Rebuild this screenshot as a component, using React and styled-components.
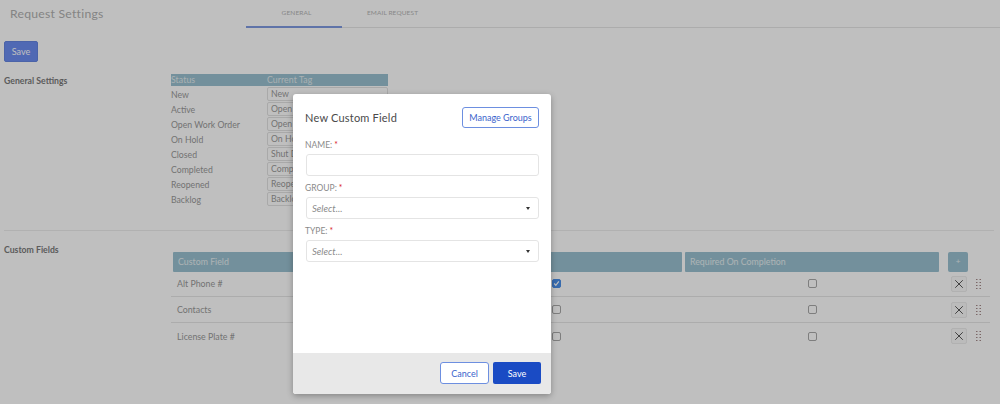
import React from "react";
import styled, { createGlobalStyle } from "styled-components";
import { X } from "lucide-react";

const Global = createGlobalStyle`
  html, body { margin: 0; padding: 0; background: #fff; }
  * { box-sizing: border-box; }
  body { font-family: "Lato", "Open Sans", sans-serif; }
`;
const Page = styled.div`position: relative; width: 1000px; height: 404px; overflow: hidden; background: #fff;`;
const Header = styled.header`display: flex; height: 28px; padding-left: 10px;`;
const Title = styled.h1`margin: 0; width: 236px; font-size: 12.2px; line-height: 27px; font-weight: 400; color: #b0b0b0; letter-spacing: .25px;`;
const Tabs = styled.nav`display: flex; flex: 1; border-bottom: 1px solid #e6e6e6; height: 28px;`;
const Tab = styled.div`
  width: 96px; padding-left: 5px; text-align: center; font-size: 6.5px; line-height: 25px; color: #b5b5b5; letter-spacing: .12px;
  border-bottom: 2px solid ${p => (p.$active ? "#7f9ae0" : "transparent")}; height: 28px;
`;
const Toolbar = styled.div`padding: 13px 0 0 4px;`;
const PrimaryBtn = styled.button`
  display: block; width: 34px; height: 21px; padding: 0; border: 1px solid #6485e0; border-radius: 2px; background: #6b8cf1;
  color: #fff; font: 400 9px "Lato", sans-serif;
`;
const Section = styled.section`display: flex; padding: 12px 0 0 4px;`;
const SectionLabel = styled.div`width: ${p => p.$w}px; font-size: 8.7px; font-weight: 700; color: #7a7a7a; line-height: 14px;`;
const StatusTable = styled.div`display: grid; grid-template-columns: 96px 121px; width: 217px; font-size: 8.7px; color: #999;`;
const StatusHead = styled.div`background: #9ac1d0; color: #e3ecef; height: 12px; line-height: 12px; margin-bottom: 1px; letter-spacing: .1px;`;
const StatusName = styled.div`height: 15px; line-height: 15px;`;
const TagBox = styled.div`height: 14px; line-height: 12px; margin-bottom: 1px; border: 1px solid #e2e2e2; border-radius: 2px; padding-left: 3px; background: #fff;`;
const Divider = styled.hr`margin: 23px 0 0 4px; border: 0; border-top: 1px solid #ededed; width: 990px;`;
const CustomSection = styled(Section)`padding-top: 12px;`;
const CustomWrap = styled.div`width: 819px; margin-top: 9px;`;
const CustomHead = styled.div`display: grid; grid-template-columns: 254px 252px 254px 26px; column-gap: 3px; padding-left: 2px; margin-bottom: -1px;`;
const HeadCell = styled.div`
  height: 20px; line-height: 20px; padding-left: 5px; background: #9ac1d0; color: #e6eff2; font-size: 8.8px; border-radius: 1px;
`;
const AddBtn = styled.button`
  margin-left: 6px; width: 20px; height: 20px; padding: 0; border: 0; border-radius: 2px; background: #9ac1d0; color: #e8f0f3; font-size: 8px; line-height: 20px;
`;
const Row = styled.div`
  display: grid; grid-template-columns: 254px 252px 254px 26px 1fr; column-gap: 3px; align-items: center; height: 26px; padding-left: 2px;
  border-bottom: ${p => (p.$last ? "none" : "1px solid #e6e6e6")};
`;
const RowName = styled.div`font-size: 8.8px; color: #999; padding-left: 4px;`;
const CheckCell = styled.div`display: flex; justify-content: center;`;
const Check = styled.span`
  width: 9px; height: 9px; border-radius: 2px; display: flex; align-items: center; justify-content: center;
  border: 1px solid ${p => (p.$on ? "#4a8fe8" : "#a8a8a8")}; background: ${p => (p.$on ? "#4a8fe8" : "#fff")};
`;
const DelBtn = styled.button`
  margin-left: 9px; width: 16px; height: 16px; padding: 0; display: flex; align-items: center; justify-content: center;
  border: 1px solid #ececec; border-radius: 2px; background: #fafafa; color: #333;
`;
const Grip = styled.svg`display: block; margin-left: 5px;`;
const Overlay = styled.div`position: absolute; inset: 0; background: rgba(0,0,0,.25);`;
const Modal = styled.div`
  position: absolute; left: 293px; top: 94px; width: 258px; height: 300px; background: #fff; border-radius: 3px;
  box-shadow: 0 2px 6px rgba(0,0,0,.3); display: flex; flex-direction: column; overflow: hidden;
`;
const ModalBody = styled.div`flex: 1; padding: 13px 12px 0;`;
const ModalHead = styled.div`display: flex; justify-content: space-between; align-items: center; height: 21px; margin-bottom: 11px;`;
const ModalTitle = styled.h2`margin: 0; font-size: 11px; font-weight: 400; color: #4a4a4a; letter-spacing: .2px;`;
const OutlineBtn = styled.button`
  width: ${p => p.$w}px; height: ${p => p.$h}px; padding: 0; background: #fff; border: 1px solid #6d8fe0; border-radius: 3px;
  color: #3a63cc; font: 400 9px "Lato", sans-serif;
`;
const Label = styled.label`display: block; height: 13px; line-height: 13px; font-size: 8.5px; color: #8a8a8a;`;
const Req = styled.span`color: #d8232a; margin-left: 2px;`;
const Field = styled.div`
  display: flex; align-items: center; justify-content: space-between; width: 233px; height: 22px; margin: 2px 0 6px 1px; padding: 0 8px 0 5px;
  border: 1px solid #e4e4e4; border-radius: 3px; background: #fff; font-size: 9.5px; font-style: italic; color: #8a8a8a;
`;
const Caret = styled.span`width: 0; height: 0; border: 2.5px solid transparent; border-top: 3px solid #333; border-bottom: 0;`;
const ModalFoot = styled.div`display: flex; justify-content: flex-end; gap: 4px; height: 41px; padding: 9px 10px 0 0; background: #e8e8e8;`;
const SaveBtn = styled.button`
  width: 48px; height: 22px; padding: 0; background: #1a4bc4; border: 0; border-radius: 2px; color: #fff; font: 400 9px "Lato", sans-serif;
`;

const statuses = [["New","New"],["Active","Open"],["Open Work Order","Open"],["On Hold","On Hold"],["Closed","Shut Down"],["Completed","Completed"],["Reopened","Reopened"],["Backlog","Backlog"]];
const fields = [["Alt Phone #", true],["Contacts", false],["License Plate #", false]];

const GripIcon = () => (
  <Grip width="5" height="10" viewBox="0 0 5 10" fill="#a58a8a">
    {[0,3,6,9].flatMap(y => [0,3.5].map(x => <rect key={`${x}-${y}`} x={x} y={y} width="1.5" height="1" />))}
  </Grip>
);

export default function App() {
  return (
    <Page>
      <Global />
      <Header>
        <Title>Request Settings</Title>
        <Tabs>
          <Tab $active>GENERAL</Tab>
          <Tab>EMAIL REQUEST</Tab>
        </Tabs>
      </Header>
      <Toolbar><PrimaryBtn>Save</PrimaryBtn></Toolbar>
      <Section>
        <SectionLabel $w={167}>General Settings</SectionLabel>
        <StatusTable>
          <StatusHead>Status</StatusHead>
          <StatusHead>Current Tag</StatusHead>
          {statuses.map(([s, t]) => (
            <React.Fragment key={s}>
              <StatusName>{s}</StatusName>
              <TagBox>{t}</TagBox>
            </React.Fragment>
          ))}
        </StatusTable>
      </Section>
      <Divider />
      <CustomSection>
        <SectionLabel $w={167}>Custom Fields</SectionLabel>
        <CustomWrap>
          <CustomHead>
            <HeadCell>Custom Field</HeadCell>
            <HeadCell>Required On Creation</HeadCell>
            <HeadCell>Required On Completion</HeadCell>
            <AddBtn>+</AddBtn>
          </CustomHead>
          {fields.map(([n, on], i) => (
            <Row key={n} $last={i === 2}>
              <RowName>{n}</RowName>
              <CheckCell>
                <Check $on={on}>
                  {on && <svg width="7" height="7" viewBox="0 0 6 6"><path d="M1 3l1.4 1.5L5 1.2" fill="none" stroke="#fff" strokeWidth="1" /></svg>}
                </Check>
              </CheckCell>
              <CheckCell><Check /></CheckCell>
              <DelBtn><X size={14} strokeWidth={1.4} /></DelBtn>
              <GripIcon />
            </Row>
          ))}
        </CustomWrap>
      </CustomSection>
      <Overlay />
      <Modal>
        <ModalBody>
          <ModalHead>
            <ModalTitle>New Custom Field</ModalTitle>
            <OutlineBtn $w={77} $h={21}>Manage Groups</OutlineBtn>
          </ModalHead>
          <Label>NAME:<Req>*</Req></Label>
          <Field />
          <Label>GROUP:<Req>*</Req></Label>
          <Field>Select...<Caret /></Field>
          <Label>TYPE:<Req>*</Req></Label>
          <Field>Select...<Caret /></Field>
        </ModalBody>
        <ModalFoot>
          <OutlineBtn $w={49} $h={22}>Cancel</OutlineBtn>
          <SaveBtn>Save</SaveBtn>
        </ModalFoot>
      </Modal>
    </Page>
  );
}
